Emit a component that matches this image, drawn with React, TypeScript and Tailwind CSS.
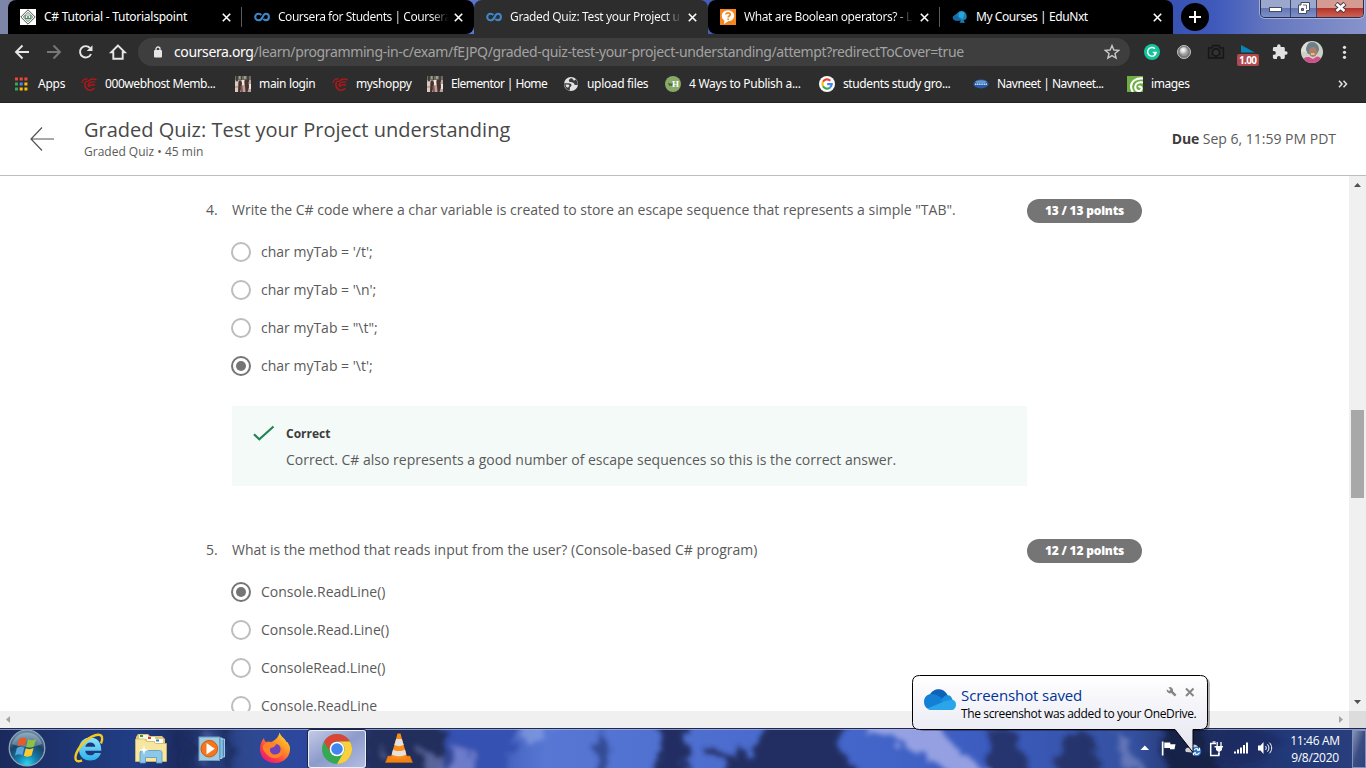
import React from 'react';

/* ---------- small pieces ---------- */

const CloseX = () => (
  <svg width="9" height="9" viewBox="0 0 9 9" className="shrink-0"><path d="M.8.8l7.4 7.4M8.2.8L.8 8.2" stroke="#fff" strokeWidth="1.6" /></svg>
);

const CourseraIcon = () => (
  <svg width="16" height="16" viewBox="0 0 16 16" className="shrink-0"><path d="M7.300 6C6.600 5.100 5.600 4.700 4.500 4.700a3.300 3.300 0 0 0 0 6.600c2.300 0 3.300-1.500 4.100-3.300.7-1.700 1.400-3.300 3.300-3.300 1.700 0 3 1.400 3 3.200s-1.300 3.200-3 3.200c-1.100 0-2-.500-2.600-1.300" fill="none" stroke="#3f86c6" strokeWidth="2.100" /></svg>
);

const TutorialIcon = () => (
  <svg width="16" height="16" viewBox="0 0 16 16" className="shrink-0">
    <rect width="16" height="16" fill="#fff" />
    <path d="M8 .8L15.200 8 8 15.200.8 8z" fill="#f4f6f4" stroke="#555" strokeWidth="1" />
    <path d="M8 3.200l4.800 4.800L8 12.800 3.200 8z" fill="#c3d6c8" stroke="#777" strokeWidth=".7" />
    <path d="M4.500 6l2.500 1h2l2.500-1-.5 4H5z" fill="#4f8a63" /><circle cx="6.500" cy="8" r=".9" fill="#fff" /><circle cx="9.500" cy="8" r=".9" fill="#fff" />
  </svg>
);

const BooleanIcon = () => (
  <svg width="16" height="16" viewBox="0 0 16 16" className="shrink-0">
    <rect width="16" height="16" fill="#f5861f" />
    <path d="M8 1.500c3.700 0 6.200 2.200 6.200 5.200S11.700 12 8.500 12L4 15l.4-3.600C2.700 10.400 1.800 8.800 1.800 6.700c0-3 2.500-5.200 6.200-5.200z" fill="#fff" />
    <path d="M6 5.500c0-2.300 4.200-2.300 4.200 0 0 1.500-2 1.500-2 3M8.100 9.600v1.500" fill="none" stroke="#f5861f" strokeWidth="1.700" />
  </svg>
);

const EduIcon = () => (
  <svg width="16" height="16" viewBox="0 0 16 16" className="shrink-0">
    <path d="M5.500 4C7 2.500 9 1.500 10.500 2c2 .5 3.800 2.200 4.200 4.700.4 2.600-.8 4.300-3.200 4.500l1.500 2.600H7.500L9 11.200C5 12.300.8 11.500.8 8.800.8 6.500 4 6 5.500 4z" fill="#1a7fb5" />
    <path d="M7 4c2-1.800 4-1.500 5.500 0l-1.500 6-4.500-2z" fill="#2aa5d4" /><path d="M.8 8.800C1 7.500 3 6.500 4.500 6L9 11.200C5 12.300.8 11.500.8 8.800z" fill="#1769a3" />
  </svg>
);

const HostIcon = () => (
  <svg width="16" height="16" viewBox="0 0 16 16" className="shrink-0" fill="none" stroke="#b3161b" strokeLinecap="round">
    <path d="M1 6.500C2 3.800 4 2.500 6.500 3" strokeWidth="1.200" /><path d="M4 7.500c-.5 3 .5 5 3.500 6.500 2 .5 4 .2 5.500-1.500" strokeWidth="1.500" /><path d="M7.500 5c2-2 5-2.500 7.500-1.300M7.500 8c1.500-2 3.500-2.500 6-1.800M8 10.500c1-1.500 3-2 5.500-1.500" strokeWidth="1.400" /><path d="M4 7.500C4 5.500 5.500 5 7 5.500M7.500 8c-.8 1.200-.5 2.500.5 2.500" strokeWidth="1.200" />
  </svg>
);

const PhotoIcon = () => (
  <svg width="16" height="16" viewBox="0 0 16 16" className="shrink-0">
    <rect width="16" height="16" fill="#b7a79b" /><path d="M0 0h16v4H0z" fill="#6f6b62" /><path d="M1 0h2v5H1zM6 0h1v4H6zM12 0h2v6h-2z" fill="#3f4038" /><path d="M4 0h1.500v3H4zM9 0h2v3H9z" fill="#9f9a8a" />
    <path d="M3.500 6l1.500-2 2 2.500-.5 5L5 16H3zM9.500 5l1.500-2 2.500 3 .5 5-1.500 5h-2z" fill="#4a3034" /><path d="M7 4h2v5H7z" fill="#efe7dc" /><path d="M5.500 10h2l.5 6H6z" fill="#8a5a58" /><path d="M0 6h3v4H0zM0 12h3v4H0z" fill="#d9ccb9" /><path d="M14 8h2v5h-2z" fill="#efe8dc" />
  </svg>
);

const AppsIcon = () => (
  <svg width="16" height="16" viewBox="0 0 16 16" className="shrink-0">
    <path d="M2 1.500h3v3H2zM6.700 1.500h3v3h-3zM11.400 1.500h3v3h-3z" fill="#f0453a" />
    <path d="M2 6.500h3v3H2z" fill="#34a853" /><path d="M6.700 6.500h3v3h-3z" fill="#4285f4" /><path d="M11.400 6.500h3v3h-3z" fill="#fbbc05" />
    <path d="M2 11.500h3v3H2z" fill="#34a853" /><path d="M6.700 11.500h3v3h-3zM11.400 11.500h3v3h-3z" fill="#fbbc05" />
  </svg>
);

const GlobeIcon = () => (
  <svg width="16" height="16" viewBox="0 0 16 16" className="shrink-0">
    <circle cx="8" cy="8" r="7" fill="#e2e2e2" />
    <path d="M9 2.300C6.500 2.300 5.500 4 6 5.200c.4 1 2 1 3.700 1.300 1.300.3 2 1.500 1.800 2.500h3.200c.3-2.300-.6-4.200-2-5.400L11 4.800z" fill="#3a3b3d" /><path d="M1.200 7.200h4.300c2 0 3 .8 3 2 0 1.500-1.700 1.300-1.700 2.800v2.500C3.500 13.800 1.300 11 1.200 7.200z" fill="#3a3b3d" /><path d="M2.500 8.500h3l1 1.200-1.500 2-2-1z" fill="#e2e2e2" />
  </svg>
);

const WikiIcon = () => (
  <span className="flex h-4 w-4 shrink-0 items-center justify-center rounded-full bg-[#87aa68] font-['Liberation_Serif',serif] text-[9px] font-bold tracking-[-1px] text-white"><span className="text-[7px] text-[#334a28]">w</span>H</span>
);

const GoogleG = () => (
  <svg width="16" height="16" viewBox="0 0 16 16" className="shrink-0">
    <circle cx="8" cy="8" r="8" fill="#fff" /><g fill="none" strokeWidth="2.200">
      <path d="M4 5.700A4.700 4.700 0 0 1 11.300 4.700" stroke="#ea4335" /><path d="M4 5.700a4.700 4.700 0 0 0 0 4.600" stroke="#fbbc05" />
      <path d="M4 10.300a4.700 4.700 0 0 0 7.100 1.200" stroke="#34a853" /><path d="M11.100 11.500A4.700 4.700 0 0 0 12.700 8.200H8.200" stroke="#4285f4" /></g>
  </svg>
);

const NavneetIcon = () => (
  <svg width="16" height="16" viewBox="0 0 16 16" className="shrink-0"><ellipse cx="8" cy="8" rx="7.700" ry="4.400" fill="#2a5ba6" /><ellipse cx="8" cy="5.800" rx="5.500" ry="1.500" fill="#6698d0" /><path d="M2 8.300h12" stroke="#cddcf0" strokeWidth="1.600" strokeDasharray="1.300 .5" /></svg>
);

const SpiralIcon = () => (
  <svg width="16" height="16" viewBox="0 0 16 16" className="shrink-0"><rect width="16" height="16" fill="#6fad45" /><path d="M16 2.500C9 1.500 4 5.500 4 10.500c0 2 .8 4 2 5.500M16 6.500c-4.500-1-7.800 1-7.800 4.500 0 4.500 5.500 5.300 6.300 2 .4-2-1.500-3-3-2" fill="none" stroke="#fff" strokeWidth="2.100" /></svg>
);

/* ---------- browser top ---------- */

type TabData = { icon: React.ReactNode; title: string; track: string; w: string; fade?: string; active?: boolean; sep?: boolean; round: string };

const tabs: TabData[] = [
  { icon: <TutorialIcon />, title: 'C# Tutorial - Tutorialspoint', track: 'tracking-[-0.24px]', w: 'w-[234px]', round: 'rounded-tl-lg', sep: true },
  { icon: <CourseraIcon />, title: 'Coursera for Students | Coursera', track: 'tracking-[-0.47px]', w: 'w-[232px]', fade: 'bg-gradient-to-r from-white from-[89%] to-black bg-clip-text text-transparent', round: 'rounded-tr-lg rounded-br-lg' },
  { icon: <CourseraIcon />, title: 'Graded Quiz: Test your Project u', track: 'tracking-[-0.36px]', w: 'w-[234px]', fade: 'bg-gradient-to-r from-white from-[91%] to-[#444] bg-clip-text text-transparent', active: true, round: 'rounded-t-lg' },
  { icon: <BooleanIcon />, title: 'What are Boolean operators? - L', track: 'tracking-[-0.4px]', w: 'w-[232px]', fade: 'bg-gradient-to-r from-white from-[90%] to-[#181818] bg-clip-text text-transparent', sep: true, round: 'rounded-l-lg' },
  { icon: <EduIcon />, title: 'My Courses | EduNxt', track: 'tracking-[-0.42px]', w: 'w-[233px]', round: 'rounded-tr-lg' },
];

const Tab = ({ t }: { t: TabData }) => (
  <div className={`relative flex h-[34px] shrink-0 items-center pl-3 text-white ${t.w} ${t.round} ${t.active ? 'bg-[#2d2d2d]' : 'bg-black'}`}>
    {t.icon}
    <span className={`ml-2 shrink-0 whitespace-nowrap text-[12px] leading-5 ${t.track} ${t.fade ?? ''}`}>{t.title}</span>
    <span className="ml-auto mr-[11px]"><CloseX /></span>
    {t.sep && <span className="absolute right-0 top-[7px] h-5 w-px bg-[#5b5b5b]" />}
  </div>
);

const TabStrip = () => (
  <div className="flex h-[34px] bg-[linear-gradient(90deg,#7d85a8_0,#6e7cc8_18%,#5b75d0_35%,#4059b8_55%,#3853b4_86%,#3f5abb_89%,#6577bf_93%,#8793cb_100%)] pl-2">
    {tabs.map((t) => <Tab key={t.title} t={t} />)}
    <div className="ml-[8px] mt-[3px] flex h-7 w-7 items-center justify-center rounded-full bg-black">
      <svg width="12" height="12"><path d="M6 0v12M0 6h12" stroke="#fff" strokeWidth="2" /></svg>
    </div>
    <div className="ml-auto mr-[2px] flex h-[18px] w-[104px] overflow-hidden rounded-b-[5px] border border-t-0 border-[#272e4b] shadow-[0_0_0_1px_rgba(210,220,245,.55)]">
      <div className="flex w-[29px] items-center justify-center bg-gradient-to-b from-[#9ba7cd] from-45% via-[#6577b4] via-50% to-[#7f91c8]">
        <svg width="13" height="6" className="mt-0.5"><rect x=".5" y=".5" width="12" height="4" fill="#fff" stroke="#434a61" /></svg>
      </div>
      <div className="flex w-[27px] items-center justify-center border-x border-[#3b466f] bg-gradient-to-b from-[#9ba7cd] from-45% via-[#6577b4] via-50% to-[#7f91c8] pb-[2px]">
        <svg width="12" height="12" viewBox="0 0 12 12"><path d="M3 .500h8.500v8h-3v3h-8V3H3z" fill="#fff" stroke="#434a61" /><path d="M3.500 6.500h2v2h-2z" fill="#7080b5" stroke="#434a61" /><path d="M5 3h3.500v4" fill="none" stroke="#434a61" strokeWidth=".8" /></svg>
      </div>
      <div className="flex flex-1 items-center justify-center bg-gradient-to-b from-[#d59b92] from-45% via-[#b4342a] via-50% to-[#cc6254] pb-[2px]">
        <svg width="13" height="11" viewBox="0 0 13 11"><path d="M2 1.500L11 9.500M11 1.500L2 9.500" stroke="#4b3844" strokeWidth="4.600" /><path d="M2.500 2L10.500 9M10.500 2L2.500 9" stroke="#fff" strokeWidth="2.700" /></svg>
      </div>
    </div>
  </div>
);

const Toolbar = () => (
  <div className="flex h-9 items-center text-white">
    <svg width="138" height="36" viewBox="0 0 138 36" className="shrink-0" fill="none" strokeWidth="1.900">
      <path d="M29 18H16.500M22.500 11.500L16 18l6.500 6.500" stroke="#e6e6e6" />
      <path d="M47 18h12.500M53.500 11.500L60 18l-6.500 6.500" stroke="#777" />
      <path d="M91 20a5.700 5.700 0 1 1-1-6" stroke="#e6e6e6" /><path d="M92.500 11.300v5.800h-5.800z" fill="#e6e6e6" />
      <path d="M118 11.500l-6.800 6.800h2.100v6.400h9.400v-6.400h2.100z" stroke="#e6e6e6" />
    </svg>
    <div className="flex h-7 w-[992px] shrink-0 items-center rounded-full bg-[#3e3e3e] pl-4 pr-[11px]">
      <svg width="8" height="12" viewBox="0 0 8 12"><rect y="4" width="8" height="7.500" rx="1" fill="#e6e6e6" /><path d="M2 5V3a2 2 0 0 1 4 0v2" fill="none" stroke="#e6e6e6" strokeWidth="1.300" /></svg>
      <span className="ml-[12px] whitespace-nowrap text-[14px] leading-5 tracking-[-0.375px] text-[#a3a3a3]"><span className="text-white">coursera.org</span>/learn/programming-in-c/exam/fEJPQ/graded-quiz-test-your-project-understanding/attempt?redirectToCover=true</span>
      <svg width="16" height="16" viewBox="0 0 14 14" className="ml-auto mr-[-1px]"><path d="M7 1.400l1.600 3.900 4.200.3-3.200 2.700 1 4.100L7 10.200l-3.600 2.200 1-4.100L1.200 5.600l4.200-.3z" fill="none" stroke="#c9c9c9" strokeWidth="1.200" /></svg>
    </div>
    <svg width="236" height="36" viewBox="1130 34 236 36" className="shrink-0">
      <defs>
        <radialGradient id="ball" cx=".4" cy=".35"><stop offset="0" stopColor="#fff" /><stop offset=".5" stopColor="#d8d8d8" /><stop offset="1" stopColor="#999" /></radialGradient>
        <clipPath id="avatar"><circle cx="1312" cy="52" r="11" /></clipPath>
      </defs>
      <circle cx="1152" cy="52" r="8" fill="#15c39a" /><path d="M1155 48.800a4.300 4.300 0 1 0 1.200 3.700h-3.400M1154.800 55v-2.200" fill="none" stroke="#fff" strokeWidth="1.400" />
      <circle cx="1184" cy="52" r="6.500" fill="#777" stroke="#c2c2c2" /><circle cx="1184" cy="51.500" r="4.500" fill="url(#ball)" />
      <path d="M1208.500 48h3l1.500-2.500h6l1.500 2.500h3v10h-15z" fill="#2a2a2a" stroke="#161616" strokeWidth="1.300" /><circle cx="1216" cy="52.500" r="3.600" fill="#333" stroke="#161616" strokeWidth="1.600" />
      <path d="M1241 45l14 7.500h-14z" fill="#0a84b8" />
      <rect x="1237" y="54" width="22" height="12" rx="2" fill="#b1494e" />
      <text x="1248" y="64" textAnchor="middle" fontSize="10" fontWeight="700" fill="#fff" fontFamily="Open Sans, sans-serif" textLength="18">1.00</text>
      <path transform="translate(1271.500 43.500) scale(.7)" d="M20.500 11H19V7a2 2 0 0 0-2-2h-4V3.500a2.500 2.500 0 0 0-5 0V5H4a2 2 0 0 0-2 2v3.800h1.500a2.700 2.700 0 0 1 0 5.400H2V20a2 2 0 0 0 2 2h3.800v-1.500a2.700 2.700 0 0 1 5.400 0V22H17a2 2 0 0 0 2-2v-4h1.500a2.500 2.500 0 0 0 0-5z" fill="#e2e2e2" />
      <g clipPath="url(#avatar)"><rect x="1300" y="40" width="24" height="24" fill="#cbd3c5" /><path d="M1300 40h8v12h-8z" fill="#e0ded4" /><path d="M1306 50c0-4 2-8 6-8s7 3 7 8l-2 4h-9z" fill="#6b808b" /><ellipse cx="1313" cy="52" rx="4" ry="5" fill="#b17e64" /><path d="M1301 64c1-6 5-7.500 8-7l4 2 4-2.500c4 .5 5.500 3 6 7.500z" fill="#d04e8c" /><path d="M1311 54h3.500" stroke="#fff" /></g>
      <circle cx="1344.500" cy="47.300" r="1.600" fill="#e2e2e2" /><circle cx="1344.500" cy="52.300" r="1.600" fill="#e2e2e2" /><circle cx="1344.500" cy="57.300" r="1.600" fill="#e2e2e2" />
    </svg>
  </div>
);

const bookmarks = [
  { icon: <AppsIcon />, label: 'Apps', w: 'w-[68px]', track: 'tracking-[-0.24px] gap-[9px]' },
  { icon: <HostIcon />, label: '000webhost Memb...', w: 'w-[154px]', track: 'tracking-[-0.42px] gap-2' },
  { icon: <PhotoIcon />, label: 'main login', w: 'w-[97px]', track: 'tracking-[-0.34px] gap-2' },
  { icon: <HostIcon />, label: 'myshoppy', w: 'w-[95px]', track: 'tracking-[-0.36px] gap-2' },
  { icon: <PhotoIcon />, label: 'Elementor | Home', w: 'w-[136px]', track: 'tracking-[-0.58px] gap-2' },
  { icon: <GlobeIcon />, label: 'upload files', w: 'w-[102px]', track: 'tracking-[-0.33px] gap-2' },
  { icon: <WikiIcon />, label: '4 Ways to Publish a...', w: 'w-[154px]', track: 'tracking-[-0.3px] gap-2' },
  { icon: <GoogleG />, label: 'students study gro...', w: 'w-[154px]', track: 'tracking-[-0.38px] gap-2' },
  { icon: <NavneetIcon />, label: 'Navneet | Navneet...', w: 'w-[154px]', track: 'tracking-[-0.52px] gap-2' },
  { icon: <SpiralIcon />, label: 'images', w: 'w-[80px]', track: 'tracking-[-0.4px] gap-2' },
];

const BookmarkBar = () => (
  <div className="flex h-[33px] items-center border-b border-[#232323] pb-[5px] pl-[13px]">
    {bookmarks.map((b, i) => (
      <div key={i} className={`flex shrink-0 items-center whitespace-nowrap text-[12px] leading-4 text-white ${b.w} ${b.track}`}>{b.icon}<span>{b.label}</span></div>
    ))}
    <svg width="10" height="8" viewBox="0 0 10 8" className="ml-auto mr-[18px]"><path d="M1 .800L4 4 1 7.200M5.500.800l3 3.200-3 3.200" fill="none" stroke="#e2e2e2" strokeWidth="1.500" /></svg>
  </div>
);

/* ---------- quiz page ---------- */

const Option = ({ label, checked }: { label: string; checked?: boolean }) => (
  <div className="flex h-[38px] items-center pl-[25px]">
    <span className={`flex h-5 w-5 items-center justify-center rounded-full border-2 ${checked ? 'border-[#757575]' : 'border-[#bdbdbd]'}`}>
      {checked && <span className="h-[10px] w-[10px] rounded-full bg-[#757575]" />}
    </span>
    <span className="ml-[10px] text-[14px] leading-5">{label}</span>
  </div>
);

const Question = ({ n, text, points }: { n: string; text: string; points: string }) => (
  <div className="mb-[10px] flex h-6 items-center">
    <span className="w-[26px] pb-0.5 text-[14px] leading-5">{n}</span>
    <span className="w-[795px] whitespace-nowrap pb-0.5 text-[14px] leading-5">{text}</span>
    <span className="flex h-6 w-[115px] items-center justify-center rounded-full bg-[#757575] text-[12px] font-extrabold leading-4 tracking-[-0.2px] text-white">{points}</span>
  </div>
);

const Quiz = () => (
  <main className="flex h-[625px] shrink-0 flex-col bg-white text-[#5a5a5a]">
    <header className="flex h-[73px] shrink-0 items-center border-b border-[#bdbdbd] pr-[30px]">
      <svg width="25" height="24" viewBox="0 0 25 24" className="ml-[30px]"><path d="M24 12H1.500M12 .500L1 12l11 11.500" fill="none" stroke="#525252" strokeWidth="1.200" /></svg>
      <div className="ml-[29px] flex flex-col">
        <h1 className="text-[20px] leading-[26px] text-[#484848]">Graded Quiz: Test your Project understanding</h1>
        <p className="text-[12px] leading-[18px]">Graded Quiz • 45 min</p>
      </div>
      <p className="ml-auto text-[14px] leading-5"><b className="font-bold tracking-[-0.15px] text-[#3c3c3c]">Due</b> Sep 6, 11:59 PM PDT</p>
    </header>
    <div className="flex min-h-0 flex-1">
      <section className="min-w-0 flex-1 overflow-hidden pl-[206px] pt-[23px]">
        <Question n="4." text={'Write the C# code where a char variable is created to store an escape sequence that represents a simple "TAB".'} points="13 / 13 points" />
        <Option label={"char myTab = '/t';"} />
        <Option label={"char myTab = '\\n';"} />
        <Option label={'char myTab = "\\t";'} />
        <Option label={"char myTab = '\\t';"} checked />
        <div className="mb-[53px] ml-[26px] mt-[21px] flex h-20 w-[795px] bg-[#f4faf8] pl-[21px] pt-[17px]">
          <svg width="22" height="17" viewBox="0 0 22 17" className="mt-[2px]"><path d="M1 9.300l5.300 5L20.500 1.500" fill="none" stroke="#1f8354" strokeWidth="2.100" /></svg>
          <div className="ml-[11px]">
            <p className="text-[12px] font-bold leading-[22px] text-[#3c3c3c]">Correct</p>
            <p className="mt-1 text-[14px] leading-[22px]">Correct. C# also represents a good number of escape sequences so this is the correct answer.</p>
          </div>
        </div>
        <Question n="5." text="What is the method that reads input from the user? (Console-based C# program)" points="12 / 12 points" />
        <Option label="Console.ReadLine()" checked />
        <Option label="Console.Read.Line()" />
        <Option label="ConsoleRead.Line()" />
        <Option label="Console.ReadLine" />
      </section>
      <div className="flex w-[17px] flex-col items-center justify-between bg-[#f0f0f0] py-[7px]">
        <svg width="7" height="4"><path d="M0 4L3.500 0 7 4z" fill="#505050" /></svg>
        <div className="mb-auto mt-[223px] h-[88px] w-[13px] bg-[#a8a8a8]" />
        <svg width="7" height="4"><path d="M0 0l3.500 4L7 0z" fill="#505050" /></svg>
      </div>
    </div>
    <div className="flex h-[17px] shrink-0 items-center bg-[#f0f0f0] pl-[6px]">
      <svg width="4" height="7"><path d="M4 0v7L0 3.500z" fill="#a3a3a3" /></svg>
      <svg width="4" height="7" className="ml-auto mr-[6px]"><path d="M0 0v7l4-3.500z" fill="#a3a3a3" /></svg>
      <span className="h-full w-[17px] bg-[#dcdcdc]" />
    </div>
  </main>
);

/* ---------- taskbar ---------- */

const Wallpaper = () => (
  <svg width="1366" height="40" viewBox="0 728 1366 40" className="absolute inset-0">
    <defs>
      <linearGradient id="sky" x1="0" x2="1"><stop offset="0" stopColor="#1a295c" /><stop offset=".06" stopColor="#1f3776" /><stop offset=".1" stopColor="#203d86" /><stop offset=".13" stopColor="#1c2b5f" /><stop offset=".18" stopColor="#2e488f" /><stop offset=".22" stopColor="#2d479f" /><stop offset=".3" stopColor="#243268" /><stop offset=".35" stopColor="#3a55b3" /><stop offset=".4" stopColor="#5877d4" /><stop offset=".6" stopColor="#4668cc" /><stop offset=".72" stopColor="#3c5cc0" /><stop offset=".83" stopColor="#34509f" /><stop offset=".88" stopColor="#1d2b5c" /><stop offset=".94" stopColor="#223978" /><stop offset="1" stopColor="#293f7e" /></linearGradient>
      <filter id="soft" filterUnits="userSpaceOnUse" x="0" y="720" width="1366" height="56">
        <feTurbulence type="fractalNoise" baseFrequency=".07 .09" numOctaves="2" seed="4" result="n" />
        <feDisplacementMap in="SourceGraphic" in2="n" scale="22" xChannelSelector="R" yChannelSelector="G" />
        <feGaussianBlur stdDeviation="2.600" />
      </filter>
    </defs>
    <rect y="728" width="1366" height="40" fill="url(#sky)" />
    <g filter="url(#soft)">
      <path d="M178 740l10-10 8 30-12 16zM222 720h8l6 50h-12z" fill="#1c2a5e" opacity=".8" /><path d="M200 738l10-6 3 20-10 14z" fill="#6b7cc9" opacity=".4" />
      <path d="M366 715h70l12 20-10 45H366z" fill="#222e5c" /><path d="M376 740l12 20h-8zM418 748l22 6 14 26h-26z" fill="#8794d3" opacity=".55" />
      <path d="M440 715h82l-18 65h-44z" fill="#3651b1" /><path d="M452 748l22 8v24h-18z" fill="#9ba1df" opacity=".55" /><path d="M523 722h35l-30 26z" fill="#8fa9e4" opacity=".6" />
      <path d="M601 728h4l7 50h-18z" fill="#273c80" opacity=".75" />
      <path d="M658 715h30l-4 27 6 8-6 30h-30l2-24 8-12z" fill="#202e64" />
      <path d="M708 744l26 16 2-16 16 12 20-42h84l-22 30 20 20 6 20H736z" fill="#212e62" /><path d="M862 716h66l60 64h-34c-20-25-50-36-92-50z" fill="#a3abe8" opacity=".85" />
      <path d="M988 724l26 6 18 50h-52l10-20zM1062 738l24-8 22 50h-56z" fill="#1f2c5c" opacity=".8" /><path d="M1114 728l14 14 10 20 10 4-6 6h-14z" fill="#8490c7" opacity=".6" /><path d="M1160 720h36l30 60h-60z" fill="#142047" /><path d="M1225 716l60 24-30 24h-40z" fill="#1b2b5f" opacity=".7" />
    </g>
    <rect y="728" width="1366" height="1" fill="#20284c" /><rect y="729" width="1366" height="1" fill="#a9b5e0" opacity=".75" />
  </svg>
);

const StartOrb = () => (
  <svg width="38" height="38" viewBox="0 0 38 38">
    <defs><radialGradient id="orb" cx=".5" cy=".95" r=".85"><stop offset="0" stopColor="#28d8f5" /><stop offset=".35" stopColor="#157aa8" /><stop offset=".7" stopColor="#1b4468" /><stop offset="1" stopColor="#5e84a0" /></radialGradient></defs>
    <circle cx="19" cy="19" r="17.800" fill="url(#orb)" stroke="#8fa5b5" strokeWidth="1.300" /><path d="M4 15a15.500 15.500 0 0 1 30 0c-8 4-20 4-30 0z" fill="#fff" opacity=".28" />
    <path d="M11 10c3-2 5-1.500 7.500-.3L16.700 17c-2.500-1.300-4.700-1.200-7.400.2z" fill="#ea5a27" /><path d="M20 10.300c3 1.400 5 1.300 8-.3L26 17.500c-2.700 1.500-5 1.400-7.800.2z" fill="#8cc243" />
    <path d="M8.900 19c2.500-1.500 5-1.500 7.400-.3l-2 7.500c-2.300-1.300-4.500-1.200-7.300.2z" fill="#5aa4de" /><path d="M17.800 19.300c3 1.300 5.200 1.200 7.800-.2l-2 7.500c-2.700 1.500-5.100 1.300-7.800.1z" fill="#fdc92c" />
  </svg>
);

const IeIcon = () => (
  <svg width="32" height="32" viewBox="0 0 32 32">
    <defs><linearGradient id="ie" x2="0" y2="1"><stop stopColor="#8ee5fb" /><stop offset="1" stopColor="#2fb0ec" /></linearGradient></defs>
    <path fillRule="evenodd" d="M17.500 5.500c7 0 11 5 10.800 13.200H12.200c.3 3 2.500 4.600 5.300 4.600 2 0 3.400-.8 4.200-2.300h6.200c-1.500 4.800-5.300 7.500-10.600 7.500-7 0-11.300-4.500-11.300-11.300S10.500 5.500 17.500 5.500zM12.300 14.800h10c-.2-2.800-2-4.400-4.900-4.400-2.800 0-4.600 1.600-5.100 4.400z" fill="url(#ie)" />
    <path d="M28 11.500c2.300-5.500 1.200-9-3-8.800C18 3.300 7.500 11.500 3.500 21c-2.500 6.500-.5 10 5.500 7.300" fill="none" stroke="#f6c91f" strokeWidth="2.400" />
  </svg>
);

const ExplorerIcon = () => (
  <svg width="34" height="32" viewBox="0 0 34 32">
    <path d="M2 4l2-3h10l2 2h12l3 3v22H2z" fill="#e0c373" /><path d="M5 2h9v4H5z" fill="#f5f5e8" /><path d="M6 2h3v2H6z" fill="#2c9a41" /><path d="M13 4h8v4h-8z" fill="#fff" /><path d="M14 4h3v2h-3z" fill="#d33f2c" /><path d="M21 6h8v4h-8z" fill="#fff" /><path d="M22 6.500h3v2h-3z" fill="#2a83d3" />
    <path d="M1.500 6h9l2 2.500h7l2 2h11v18h-31z" fill="#f7e6a0" stroke="#d6b762" strokeWidth=".8" /><path d="M6 30V20c0-1.500.8-2.500 2.500-2.500h17c1.700 0 2.500 1 2.500 2.500v10h-5.500v-5.500h-11V30z" fill="#8ec8e8" stroke="#5a96bb" strokeWidth=".8" /><path d="M10 12l1 4 4 1-4 1-1 4-1-4-4-1 4-1z" fill="#fff" />
  </svg>
);

const PlayerIcon = () => (
  <svg width="28" height="28" viewBox="0 0 28 28">
    <path d="M19 4h7.500v18H20z" fill="#4b8db8" stroke="#9bcbe6" /><path d="M18 3h6v20.500h-6z" fill="#69abd1" stroke="#a9d5ee" /><rect x="1" y="2" width="20.500" height="23.500" fill="#9fcbe4" stroke="#6c9dbb" /><circle cx="11.300" cy="13.700" r="8.300" fill="#f2771f" stroke="#cf5a0d" /><path d="M8.500 8l8.300 5.700-8.300 5.700z" fill="#fff" />
  </svg>
);

const FirefoxIcon = () => (
  <svg width="32" height="32" viewBox="0 0 32 32">
    <defs><linearGradient id="fox" x1="1" y1="0" x2=".2" y2="1"><stop stopColor="#ffe745" /><stop offset=".4" stopColor="#ff9a25" /><stop offset=".75" stopColor="#fb3c4b" /><stop offset="1" stopColor="#e31587" /></linearGradient></defs>
    <path d="M20.500.500c1.500 4.500 5.500 5.500 7 9.500 1-.3 1.700.7 2 2C31 14 31 15.500 31 17c0 8-6.500 14-15 14S1 25.500 1 17c0-4.500 1.500-8 4-11 0 1.700.8 3 2 4 1.800-.7 3.500-.7 5 0 3.500-1.500 7.500-4 8.500-9.500z" fill="url(#fox)" />
    <circle cx="16.500" cy="18" r="6" fill="#6c42bd" /><path d="M4.500 13c3-3.500 6-3 9-1l4-.300-2.500 3.300-3.500 1c-1 1.500-.5 3.500.5 4.800 2.500 3 7.500 2 9-1 1.200-2.500.5-4.800-1-6.300 3.500 1 5 5 3.300 8.500-2.500 5-10 5.500-14.300 1.500S2.500 16 4.500 13z" fill="#ff8325" />
  </svg>
);

const ChromeIcon = () => (
  <svg width="32" height="32" viewBox="0 0 32 32">
    <circle cx="16" cy="16" r="15" fill="#36a852" /><path d="M3 8.500A15 15 0 0 1 29 8.500H16a7.500 7.500 0 0 0-6.500 11.250z" fill="#dc4437" /><path d="M29 8.500A15 15 0 0 1 16 31l6.500-11.250A7.500 7.500 0 0 0 16 8.500z" fill="#fbcf3d" />
    <circle cx="16" cy="16" r="7.300" fill="#fff" /><circle cx="16" cy="16" r="5.800" fill="#4285ee" />
  </svg>
);

const VlcIcon = () => (
  <svg width="28" height="32" viewBox="0 0 28 32">
    <path d="M3 24h22l2.500 6.500h-27z" fill="#f28312" stroke="#c96507" strokeWidth=".6" /><path d="M12.500 1.500h3L22 25c-2 3-14 3-16 0z" fill="#fb8c16" /><path d="M11.200 7h5.600l1.900 6c-3 1.500-6.400 1.500-9.400 0z" fill="#e4e1de" /><path d="M8 17.500c3.500 2 8.500 2 12 0l1.300 5c-4 2.400-10.600 2.400-14.600 0z" fill="#e4e1de" />
  </svg>
);

const TrayIcons = () => (
  <svg width="140" height="22" viewBox="1138 738 140 22" className="shrink-0">
    <path d="M1140.500 751l4.300-4.500 4.300 4.500z" fill="#fff" />
    <path d="M1161.800 742.500h1.700v14h-1.700z" fill="#fff" /><path d="M1164.300 743.500h6v1.800h5.200l-1 5h-4.500v-1.300h-5.700z" fill="#fff" />
    <path d="M1186 753c-2-3 1-5 3-4 2-5 8-4 9-1v6z" fill="#cfd0d6" /><circle cx="1196.500" cy="752.500" r="4.800" fill="#2a75c4" /><path d="M1193.500 751.500c1-2.300 3.500-2.300 5-.8M1199.500 753.500c-1 2.500-3.700 2.300-5 .8M1199.500 748.800v2.400h-2.500M1193.500 756.200v-2.400h2.500" fill="none" stroke="#fff" strokeWidth="1.100" />
    <path d="M1216 744.500h-5.300v12h8v-2.500" fill="none" stroke="#fff" strokeWidth="1.500" /><path d="M1212.500 743h3" stroke="#fff" strokeWidth="1.300" /><path d="M1217.200 743v4M1221 743v4M1219 752v4.500" stroke="#fff" strokeWidth="1.300" /><path d="M1214.500 747h8.500v1.500h-1v2.500l-2 1.500h-2l-2-1.500v-2.500h-1.500z" fill="#fff" />
    <path d="M1234 752.500h2v2h-2zM1237 750.500h2v4h-2zM1240 748.500h2v6h-2zM1243 746h2v8.500h-2zM1246 743.500h2v11h-2z" fill="#fff" />
    <path d="M1258 746.500h2.500l3-3.500v12l-3-3.500h-2.500z" fill="#fff" /><path d="M1265.500 747c1 1.300 1 2.700 0 4M1267.500 745.300c1.900 2.300 1.900 5 0 7.400M1269.500 743.700c2.900 3.300 2.900 7.300 0 10.600" fill="none" stroke="#fff" strokeWidth="1" />
  </svg>
);

const Taskbar = () => (
  <footer className="relative h-10 overflow-hidden">
    <Wallpaper />
    <div className="relative flex h-full items-center text-white">
      <div className="ml-2 flex w-[60px]"><StartOrb /></div>
      <div className="ml-[5px] w-[61px]"><IeIcon /></div>
      <div className="w-[64px] pt-0.5"><ExplorerIcon /></div>
      <div className="w-[61px] pt-0.5"><PlayerIcon /></div>
      <div className="w-[49px]"><FirefoxIcon /></div>
      <div className="mt-[2px] flex h-[38px] w-[58px] items-center justify-center rounded-[3px] border border-white/80 bg-gradient-to-br from-[#c3cae6] via-[#8d9bcb] to-[#b3bce2] shadow-[0_0_0_1px_#1b2448]"><ChromeIcon /></div>
      <div className="ml-[19px]"><VlcIcon /></div>
      <div className="ml-auto flex items-center">
        <TrayIcons />
        <div className="flex w-[74px] flex-col items-center pt-[1px] text-[12px] leading-[17px] tracking-[-0.3px]"><span>11:46 AM</span><span>9/8/2020</span></div>
        <div className="mt-[2px] h-[38px] w-[14px] border border-[#8190b9] bg-gradient-to-br from-[#8995b8] via-[#3c4d83] to-[#2b4180]" />
      </div>
    </div>
  </footer>
);

const Balloon = () => (
  <div className="absolute left-[912px] top-[675px] h-[87px] w-[302px]">
    <svg width="302" height="90" viewBox="0 0 302 90" className="absolute inset-0">
      <defs><linearGradient id="bal" x2="0" y2="1"><stop stopColor="#fff" /><stop offset="1" stopColor="#e3e4f0" /></linearGradient></defs>
      <path d="M10 3h282q6 0 6 6v40q0 7-7 7H13q-8 0-9-6z" fill="#000" opacity=".3" />
      <path d="M7.500.500h281q7 0 7 7v40q0 7-7 7H281v23L263 54.500H7.500q-7 0-7-7v-40q0-7 7-7z" fill="url(#bal)" stroke="#000" strokeLinejoin="round" />
      <path d="M17.500 20C20 15 25 13.500 29 14.500c3 .7 5.500 3 6.800 6L30 27z" fill="#0f62b5" />
      <path d="M12 27c0-5 3-8 8-8 3 0 5 1 7 2.500l8 5L16.500 34C13.500 33 12 30 12 27z" fill="#1380d6" /><path d="M29 26c1.500-4 4-6 7-5.800 3 .2 4 2.500 4.500 5.300L32 28z" fill="#1790df" /><path d="M15.500 33.500L32 26.500l8.500-2c2.500 1 3.500 2.800 3.500 5 0 3.500-2 5.500-5 5.500H19c-1.500 0-2.500-.5-3.500-1.500z" fill="#2ba5e9" />
      <path d="M256.500 12.500a3.200 3.200 0 0 1 4.500 3.800l3.500 3.500-1.800 1.800-3.500-3.500a3.200 3.200 0 0 1-4.400-3.800l2.200 1.800 1.500-1.400z" fill="#858585" />
      <path d="M274 13.500l7.500 7.500M281.500 13.500L274 21" stroke="#858585" strokeWidth="2" />
    </svg>
    <div className="relative flex flex-col whitespace-nowrap pl-[49px] pt-[10px]">
      <span className="text-[15px] leading-[21px] tracking-[-0.1px] text-[#003399]">Screenshot saved</span>
      <span className="text-[12px] leading-4 tracking-[-0.38px] text-black">The screenshot was added to your OneDrive.</span>
    </div>
  </div>
);

export default function App() {
  return (
    <div className="relative flex h-[768px] w-[1366px] flex-col overflow-hidden bg-[#2d2d2d] font-['Open_Sans',sans-serif]">
      <div className="h-[103px] shrink-0 bg-[#2d2d2d] font-['Noto_Sans',sans-serif]">
        <TabStrip />
        <Toolbar />
        <BookmarkBar />
      </div>
      <Quiz />
      <Taskbar />
      <Balloon />
    </div>
  );
}
